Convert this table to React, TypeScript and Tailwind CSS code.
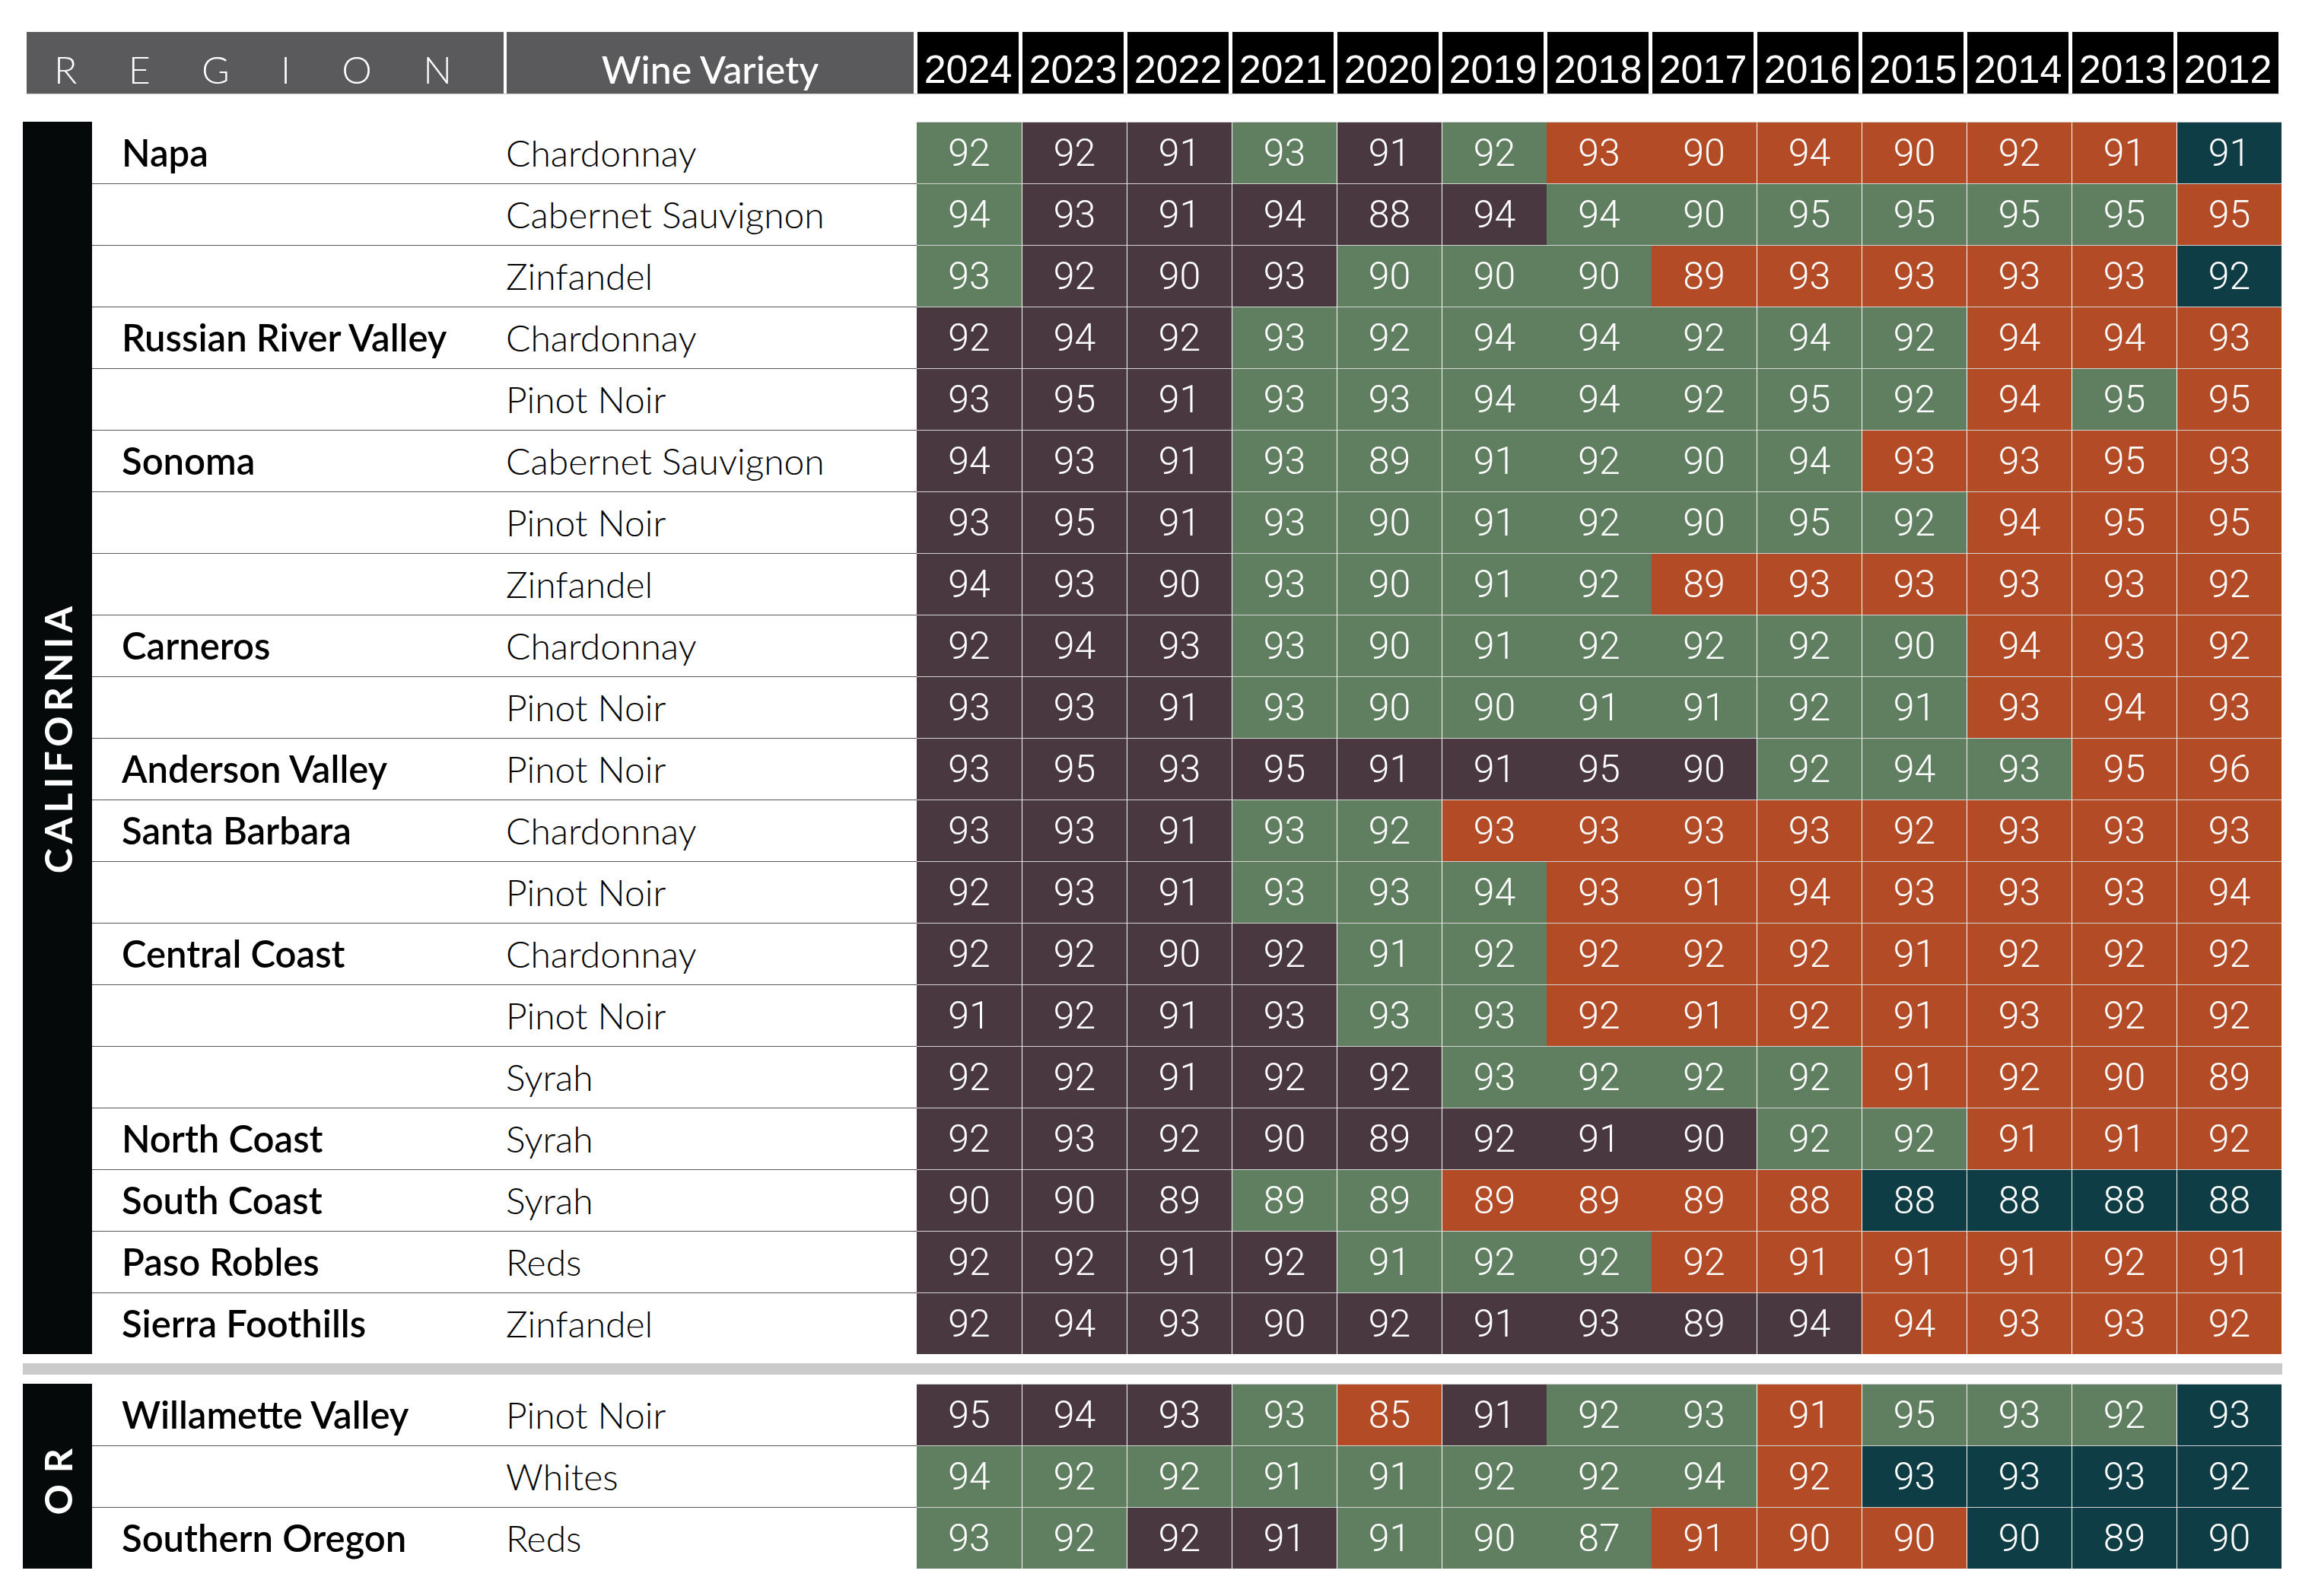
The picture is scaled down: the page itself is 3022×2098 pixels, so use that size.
import React from "react";

type Cell = { v: string; c: string };

const COLOR: Record<string, string> = {
  G: "bg-[#5f7f60]",
  P: "bg-[#493840]",
  R: "bg-[#b34b27]",
  T: "bg-[#0e3d45]",
};

const YEARS = ["2024", "2023", "2022", "2021", "2020", "2019", "2018", "2017", "2016", "2015", "2014", "2013", "2012"];

const CA: [string, string, string][] = [
  ["Napa", "Chardonnay", "92G 92P 91P 93G 91P 92G 93R 90R 94R 90R 92R 91R 91T"],
  ["", "Cabernet Sauvignon", "94G 93P 91P 94P 88P 94P 94G 90G 95G 95G 95G 95G 95R"],
  ["", "Zinfandel", "93G 92P 90P 93P 90G 90G 90G 89R 93R 93R 93R 93R 92T"],
  ["Russian River Valley", "Chardonnay", "92P 94P 92P 93G 92G 94G 94G 92G 94G 92G 94R 94R 93R"],
  ["", "Pinot Noir", "93P 95P 91P 93G 93G 94G 94G 92G 95G 92G 94R 95G 95R"],
  ["Sonoma", "Cabernet Sauvignon", "94P 93P 91P 93G 89G 91G 92G 90G 94G 93R 93R 95R 93R"],
  ["", "Pinot Noir", "93P 95P 91P 93G 90G 91G 92G 90G 95G 92G 94R 95R 95R"],
  ["", "Zinfandel", "94P 93P 90P 93G 90G 91G 92G 89R 93R 93R 93R 93R 92R"],
  ["Carneros", "Chardonnay", "92P 94P 93P 93G 90G 91G 92G 92G 92G 90G 94R 93R 92R"],
  ["", "Pinot Noir", "93P 93P 91P 93G 90G 90G 91G 91G 92G 91G 93R 94R 93R"],
  ["Anderson Valley", "Pinot Noir", "93P 95P 93P 95P 91P 91P 95P 90P 92G 94G 93G 95R 96R"],
  ["Santa Barbara", "Chardonnay", "93P 93P 91P 93G 92G 93R 93R 93R 93R 92R 93R 93R 93R"],
  ["", "Pinot Noir", "92P 93P 91P 93G 93G 94G 93R 91R 94R 93R 93R 93R 94R"],
  ["Central Coast", "Chardonnay", "92P 92P 90P 92P 91G 92G 92R 92R 92R 91R 92R 92R 92R"],
  ["", "Pinot Noir", "91P 92P 91P 93P 93G 93G 92R 91R 92R 91R 93R 92R 92R"],
  ["", "Syrah", "92P 92P 91P 92P 92P 93G 92G 92G 92G 91R 92R 90R 89R"],
  ["North Coast", "Syrah", "92P 93P 92P 90P 89P 92P 91P 90P 92G 92G 91R 91R 92R"],
  ["South Coast", "Syrah", "90P 90P 89P 89G 89G 89R 89R 89R 88R 88T 88T 88T 88T"],
  ["Paso Robles", "Reds", "92P 92P 91P 92P 91G 92G 92G 92R 91R 91R 91R 92R 91R"],
  ["Sierra Foothills", "Zinfandel", "92P 94P 93P 90P 92P 91P 93P 89P 94P 94R 93R 93R 92R"],
];

const OR: [string, string, string][] = [
  ["Willamette Valley", "Pinot Noir", "95P 94P 93P 93G 85R 91P 92G 93G 91R 95G 93G 92G 93T"],
  ["", "Whites", "94G 92G 92G 91G 91G 92G 92G 94G 92R 93T 93T 93T 92T"],
  ["Southern Oregon", "Reds", "93G 92G 92P 91P 91G 90G 87G 91R 90R 90R 90T 89T 90T"],
];

function parse(s: string): Cell[] {
  return s.split(" ").map((t) => ({ v: t.slice(0, 2), c: t.slice(2) }));
}

function Row({ name, variety, cells, first }: { name: string; variety: string; cells: Cell[]; first: boolean }) {
  return (
    <div className="flex h-[81px]">
      <div
        className={
          first
            ? "w-[542px] flex items-center pl-[39px] text-[49px] font-semibold text-black font-[Lato,sans-serif]"
            : "w-[542px] flex items-center pl-[39px] text-[49px] font-semibold text-black font-[Lato,sans-serif] border-t border-t-[#595959]"
        }
      >
        {name}
      </div>
      <div
        className={
          first
            ? "w-[542px] flex items-center pl-[2px] text-[48px] font-light text-black font-[Lato,sans-serif]"
            : "w-[542px] flex items-center pl-[2px] text-[48px] font-light text-black font-[Lato,sans-serif] border-t border-t-[#595959]"
        }
      >
        {variety}
      </div>
      {cells.map((c, i) => (
        <div
          key={i}
          className={
            (i === 0 || i === 6 || i === 7
              ? "w-[138px] flex items-center justify-center border-t border-t-[#d3d3d3] "
              : "w-[138px] flex items-center justify-center border-t border-t-[#d3d3d3] border-l border-l-white ") +
            COLOR[c.c] +
            " text-white text-[50px] font-light font-[Roboto,sans-serif]"
          }
        >
          {c.v}
        </div>
      ))}
    </div>
  );
}

function Group({ label, rows, tracking }: { label: string; rows: [string, string, string][]; tracking: string }) {
  return (
    <div className="flex">
      <div className="w-[91px] bg-[#060909] flex items-center justify-center">
        <span className={"[writing-mode:vertical-rl] rotate-180 text-white font-bold text-[50px] leading-none font-[Lato,sans-serif] " + tracking}>
          {label}
        </span>
      </div>
      <div className="flex flex-col">
        {rows.map((r, i) => (
          <Row key={i} name={r[0]} variety={r[1]} cells={parse(r[2])} first={i === 0} />
        ))}
      </div>
    </div>
  );
}

export default function App() {
  return (
    <div className="w-[3022px] h-[2098px] bg-white pt-[42px] pl-[30px]">
      <div className="flex h-[82px] ml-[5px] w-[2961px] border-b border-b-[#cfcfcf]">
        <div className="w-[627px] bg-[#5a5a5c] flex items-center justify-between pt-[17px] pl-[36px] pr-[68px] text-white text-[50px] font-light font-[Lato,sans-serif]">
          <span>R</span>
          <span>E</span>
          <span>G</span>
          <span>I</span>
          <span>O</span>
          <span>N</span>
        </div>
        <div className="w-[4px]" />
        <div className="w-[535px] bg-[#5a5a5c] flex items-center justify-center pt-[17px] text-white text-[50px] font-medium font-[Lato,sans-serif]">
          Wine Variety
        </div>
        {YEARS.map((y) => (
          <div
            key={y}
            className="w-[138px] bg-black border-l-[5px] border-l-white flex items-center justify-center pt-[17px] text-white text-[52px] font-['Liberation_Sans',Arial,sans-serif]"
          >
            {y}
          </div>
        ))}
      </div>
      <div className="mt-[36px]">
        <Group label="CALIFORNIA" rows={CA} tracking="tracking-[0.12em]" />
      </div>
      <div className="mt-[12px] h-[15px] w-[2970px] bg-[#cacaca]" />
      <div className="mt-[12px]">
        <Group label="OR" rows={OR} tracking="tracking-[0.3em]" />
      </div>
    </div>
  );
}
